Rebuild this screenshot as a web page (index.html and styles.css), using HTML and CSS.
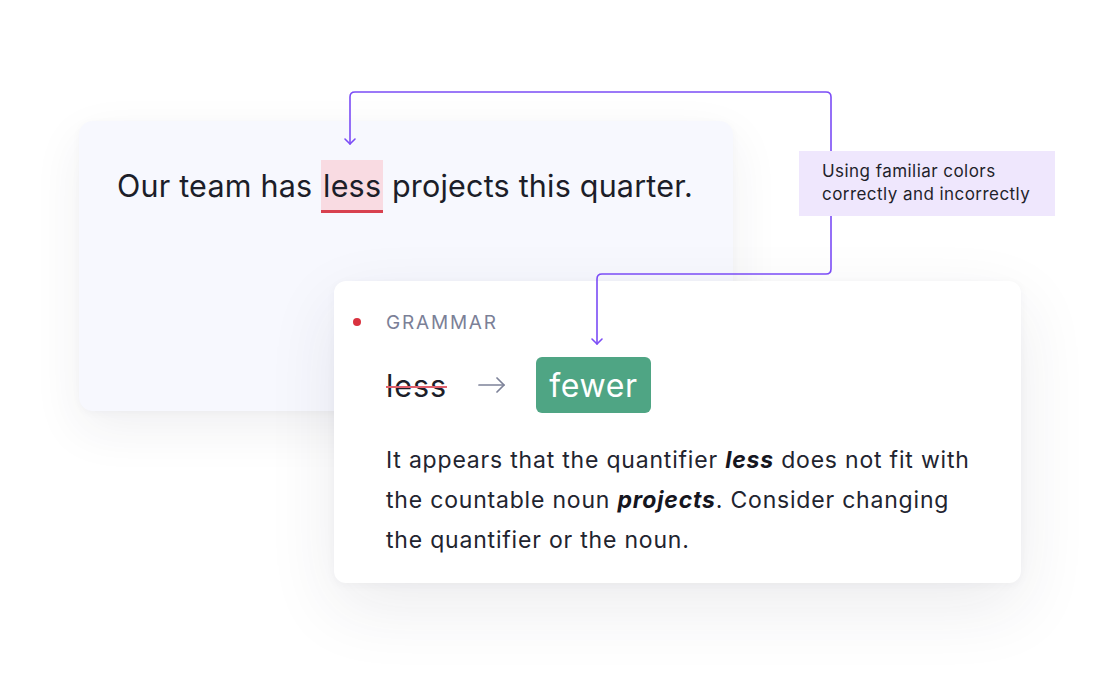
FILE: index.html
```html
<!DOCTYPE html>
<html lang="en">
<head>
<meta charset="utf-8">
<title>Grammar suggestion</title>
<link rel="stylesheet" href="styles.css">
</head>
<body>
<div class="stage">
  <div class="editor-card">
    <p class="sentence">Our team has <span class="flag">less</span> projects this quarter.</p>
  </div>
  <div class="suggest-card">
    <div class="suggest-head"><span class="dot"></span><span class="kind">GRAMMAR</span></div>
    <div class="suggest-row">
      <span class="old">less</span>
      <svg class="arrow" width="27" height="16" viewBox="0 0 27 16" aria-hidden="true">
        <g fill="none" stroke="#7d8299" stroke-width="1.7" stroke-linecap="round" stroke-linejoin="round">
          <path d="M1 8 H26"/>
          <path d="M19 1 L26 8 L19 15"/>
        </g>
      </svg>
      <span class="new">fewer</span>
    </div>
    <p class="explain">It appears that the quantifier <b><i>less</i></b> does not fit with the countable noun <b><i>projects</i></b>. Consider changing the quantifier or the noun.</p>
  </div>

  <svg class="connector" width="1100" height="700" viewBox="0 0 1100 700" aria-hidden="true">
    <g fill="none" stroke="#7b4cf6" stroke-width="1.6" stroke-linecap="round" stroke-linejoin="round">
      <path d="M350 144 V97 Q350 92 355 92 H826 Q831 92 831 97 V152"/>
      <path d="M345 139 L350 144 L355 139"/>
      <path d="M831 215 V269 Q831 274 826 274 H602 Q597 274 597 279 V344"/>
      <path d="M592 339 L597 344 L602 339"/>
    </g>
  </svg>

  <div class="note">Using familiar colors<br>correctly and incorrectly</div>
</div>
</body>
</html>
```

FILE: styles.css
```css
* { box-sizing: border-box; }

html, body {
  margin: 0;
  padding: 0;
  background: #ffffff;
}

body {
  font-family: Inter, "Noto Sans", sans-serif;
  color: #1d1f2b;
}

.stage {
  position: relative;
  width: 1100px;
  height: 700px;
  padding-top: 121px;
  overflow: hidden;
}

.editor-card {
  margin-left: 79px;
  width: 654px;
  height: 290px;
  background: #f7f8fe;
  border-radius: 14px;
  padding: 38px 0 0 38px;
  box-shadow: 0 18px 50px rgba(40, 40, 70, 0.07), 0 2px 8px rgba(40, 40, 70, 0.03);
}

.sentence {
  margin: 0;
  font-size: 30.5px;
  line-height: 53px;
  color: #1c1e29;
  letter-spacing: 0.2px;
  white-space: nowrap;
}

.flag {
  display: inline-block;
  height: 53px;
  padding: 0 2px;
  background: #f9dbe2;
  border-bottom: 3px solid #d8414f;
  line-height: 51px;
}

.suggest-card {
  position: relative;
  margin-left: 334px;
  margin-top: -130px;
  width: 687px;
  height: 302px;
  background: #ffffff;
  border-radius: 12px;
  padding: 29px 40px 23px 52px;
  box-shadow: 0 24px 70px rgba(40, 40, 70, 0.09), 0 2px 10px rgba(40, 40, 70, 0.04);
}

.suggest-head {
  display: flex;
  align-items: center;
  height: 24px;
}

.dot {
  width: 8px;
  height: 8px;
  border-radius: 50%;
  background: #d9323f;
  margin-left: -33px;
  margin-right: 25px;
  flex: none;
}

.kind {
  font-size: 19px;
  letter-spacing: 1.8px;
  color: #7b8097;
  font-weight: 400;
}

.suggest-row {
  display: flex;
  align-items: center;
  margin-top: 23px;
  height: 56px;
}

.old {
  font-size: 30.5px;
  letter-spacing: 0.9px;
  color: #1c1e29;
  text-decoration: line-through;
  text-decoration-color: #e0606c;
  text-decoration-thickness: 1.5px;
}

.arrow {
  display: block;
  flex: none;
  margin-left: 31px;
  margin-right: 31px;
}

.new {
  display: inline-flex;
  align-items: center;
  justify-content: center;
  width: 115px;
  height: 56px;
  background: #4fa584;
  color: #ffffff;
  border-radius: 6px;
  font-size: 32px;
  letter-spacing: 0.6px;
}

.explain {
  margin: 27px 0 0 0;
  font-size: 23px;
  line-height: 40px;
  letter-spacing: 0.8px;
  color: #22242f;
}

.explain b {
  font-weight: 700;
  color: #15161f;
}

.connector {
  position: absolute;
  left: 0;
  top: 0;
}

.note {
  position: absolute;
  left: 799px;
  top: 151px;
  width: 256px;
  height: 65px;
  background: #efe7fd;
  padding: 9px 0 0 23px;
  font-size: 17px;
  line-height: 23px;
  letter-spacing: 0.45px;
  color: #1f1f2b;
}
```
